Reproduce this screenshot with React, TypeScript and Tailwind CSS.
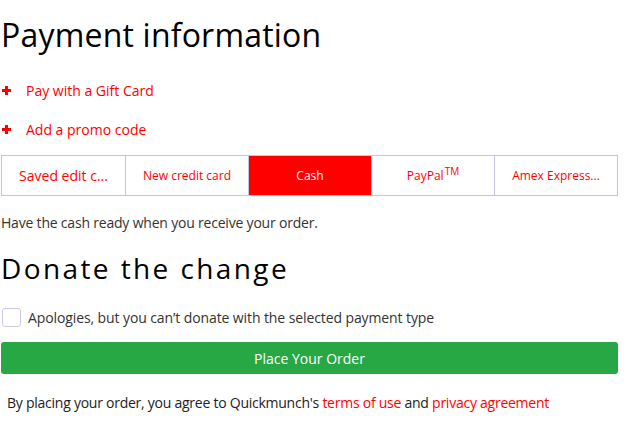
import { useState } from 'react'

const tabs = [
  { label: 'Saved edit c...', big: true },
  { label: 'New credit card' },
  { label: 'Cash' },
  { label: 'PayPal', tm: true },
  { label: 'Amex Express...' },
]

function PlusIcon() {
  return (
    <svg width="9" height="9" viewBox="0 0 9 9" className="shrink-0">
      <rect x="3" y="0" width="3" height="9" fill="#ff0000" />
      <rect x="0" y="3" width="9" height="3" fill="#ff0000" />
    </svg>
  )
}

export default function App() {
  const [active, setActive] = useState(2)

  return (
    <div className="bg-white min-h-screen font-['Open_Sans',sans-serif] text-[#222]">
      <div className="ml-[1px] w-[617px]">
        {/* Payment information */}
        <h1 className="pt-[13px] h-[71px] text-[32px] leading-[44px] tracking-[0.2px] text-black font-normal">
          Payment information
        </h1>

        <div className="flex flex-col">
          <a className="flex items-center h-[39px] pl-[1px] text-[14px] text-[#ff0000] cursor-pointer">
            <PlusIcon />
            <span className="ml-[15px]">Pay with a Gift Card</span>
          </a>
          <a className="flex items-center h-[39px] pl-[1px] text-[14px] text-[#ff0000] cursor-pointer">
            <PlusIcon />
            <span className="ml-[15px]">Add a promo code</span>
          </a>
        </div>

        {/* payment tabs */}
        <div className="mt-[6px] grid grid-cols-5 h-[41px] border border-[#c6c2dc]">
          {tabs.map((t, i) => (
            <button
              key={t.label}
              onClick={() => setActive(i)}
              className={`flex items-center justify-center ${i > 0 ? 'border-l border-[#c6c2dc]' : ''} ${
                active === i ? 'bg-[#ff0000] text-white' : 'bg-white text-[#ff0000]'
              } ${t.big ? 'text-[14px]' : 'text-[12px]'}`}
            >
              {t.label}
              {t.tm && <sup className="text-[10px] ml-[1px] -top-[0.5em]">TM</sup>}
            </button>
          ))}
        </div>

        <p className="mt-[17px] text-[14px] leading-[20px] tracking-[-0.2px] text-[#333]">
          Have the cash ready when you receive your order.
        </p>

        {/* Donate */}
        <h2 className="mt-[15px] text-[28px] leading-[40px] tracking-[2.4px] text-black">
          Donate the change
        </h2>

        <label className="mt-[19px] flex items-center h-[20px]">
          <span className="w-[19px] h-[19px] ml-[1px] rounded-[3px] border border-[#cdc8e6] bg-white" />
          <span className="ml-[7px] text-[14px] tracking-[-0.1px] text-[#333]">
            Apologies, but you can’t donate with the selected payment type
          </span>
        </label>

        <button className="mt-[15px] w-full h-[32px] rounded-[3px] bg-[#28a745] text-white text-[14px]">
          Place Your Order
        </button>

        <p className="mt-[18px] pl-[6px] text-[14px] tracking-[-0.25px] text-[#222]">
          By placing your order, you agree to Quickmunch's{' '}
          <a className="text-[#ff0000]">terms of use</a> and{' '}
          <a className="text-[#ff0000]">privacy agreement</a>
        </p>
      </div>
    </div>
  )
}
